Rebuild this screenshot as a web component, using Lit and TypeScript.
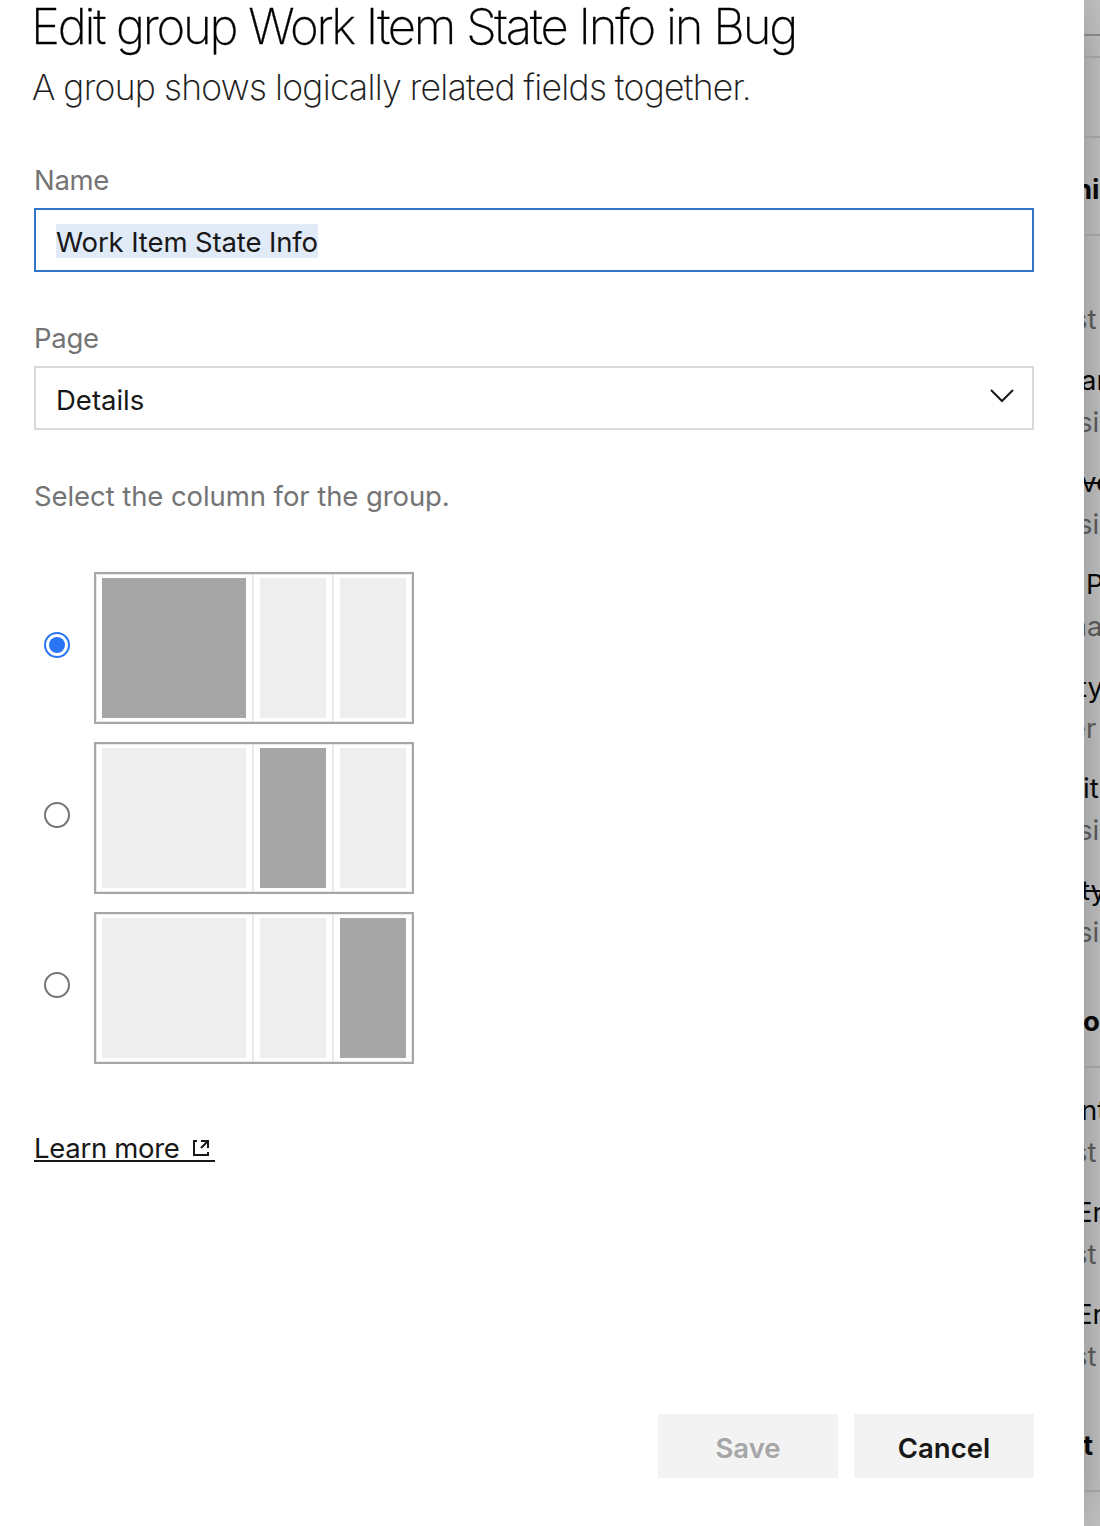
import { LitElement, html, css, svg } from "lit";
import { customElement, state } from "lit/decorators.js";
import { classMap } from "lit/directives/class-map.js";

type BackRow = { gap: number; x: number; text: string; kind: string };

// Slice of the form layout that stays visible beside the dialog.
const BACK_ROWS: BackRow[] = [
  { gap: 34, x: 0, text: "", kind: "rule strong" },
  { gap: 20, x: 0, text: "", kind: "rule" },
  { gap: 78, x: 0, text: "", kind: "rule" },
  { gap: 34, x: -9, text: "ni", kind: "head" },
  { gap: 28, x: 0, text: "", kind: "rule" },
  { gap: 66, x: -11, text: "st", kind: "sub" },
  { gap: 27, x: -3, text: "ar", kind: "field" },
  { gap: 8, x: -6, text: "si", kind: "sub" },
  { gap: 26, x: -3, text: "ve", kind: "field gone" },
  { gap: 8, x: -6, text: "si", kind: "sub" },
  { gap: 26, x: 2, text: "P", kind: "field" },
  { gap: 8, x: -21, text: "ma", kind: "sub" },
  { gap: 27, x: -6, text: "ty", kind: "field" },
  { gap: 7, x: -14, text: "er", kind: "sub" },
  { gap: 26, x: -1, text: "it", kind: "field" },
  { gap: 8, x: -6, text: "si", kind: "sub" },
  { gap: 26, x: -3, text: "ty", kind: "field gone" },
  { gap: 8, x: -6, text: "si", kind: "sub" },
  { gap: 55, x: -1, text: "o", kind: "head" },
  { gap: 28, x: 0, text: "", kind: "rule" },
  { gap: 25, x: -3, text: "nt", kind: "field" },
  { gap: 8, x: -11, text: "st", kind: "sub" },
  { gap: 26, x: -8, text: "Er", kind: "field" },
  { gap: 8, x: -11, text: "st", kind: "sub" },
  { gap: 26, x: -8, text: "Er", kind: "field" },
  { gap: 8, x: -11, text: "st", kind: "sub" },
  { gap: 55, x: -1, text: "t", kind: "head" },
  { gap: 28, x: 0, text: "", kind: "rule" },
];

@customElement("form-backdrop")
class FormBackdrop extends LitElement {
  static styles = css`
    :host {
      display: flex;
      flex-direction: column;
      width: 16px;
      overflow: hidden;
      background:
        linear-gradient(180deg, rgba(190, 190, 190, 0.7), rgba(190, 190, 190, 0) 50px),
        linear-gradient(0deg, rgba(190, 190, 190, 0.7), rgba(190, 190, 190, 0) 50px),
        linear-gradient(90deg, #a7a7a7, #b7b7b7);
      font: 27.5px/34px Inter, "Liberation Sans", sans-serif;
      color: #080808;
    }
    .row { flex: none; white-space: nowrap; }
    .label { display: block; height: 34px; }
    .rule .label { height: 2px; background: #9f9f9f; }
    .strong .label { background: #858585; }
    .head { font-weight: 700; }
    .sub { color: #555; }
    .gone { text-decoration: line-through; }
  `;
  render() {
    return BACK_ROWS.map(
      (r) => html`<div class="row ${r.kind}" style="padding-top:${r.gap}px">
        <span class="label" style="margin-left:${r.x}px">${r.text}</span>
      </div>`
    );
  }
}

@customElement("column-preview")
class ColumnPreview extends LitElement {
  static properties = { active: { type: Number } };
  declare active: number;
  static styles = css`
    :host {
      display: flex;
      box-sizing: border-box;
      width: 320px;
      height: 152px;
      border: 2px solid #a6a6a6;
      box-shadow: inset 0 0 0 1px #e9e9e9;
    }
    .cell { flex: none; box-sizing: border-box; width: 80px; padding: 4px 6px; border-right: 2px solid #e8e8e8; }
    .wide { width: 158px; }
    .last { width: 78px; border-right: 0; }
    .fill { height: 140px; background: #eee; }
    .on { background: #a6a6a6; }
  `;
  render() {
    return [0, 1, 2].map(
      (i) => html`<div class=${classMap({ cell: true, wide: i === 0, last: i === 2 })}>
        <div class=${classMap({ fill: true, on: i === this.active })}></div>
      </div>`
    );
  }
}

@customElement("app-root")
class AppRoot extends LitElement {
  @state() private column = 0;

  static styles = css`
    :host {
      display: flex;
      width: 1100px;
      height: 1526px;
      overflow: hidden;
      background: #fff;
      font: 27.5px/34px Inter, "Liberation Sans", sans-serif;
      color: #181818;
    }
    .dialog {
      flex: none;
      box-sizing: border-box;
      width: 1084px;
      padding: 0 50px 48px 34px;
      display: flex;
      flex-direction: column;
      align-items: flex-start;
      white-space: nowrap;
    }
    .title { margin: -3px 0 0 -3px; font-size: 49px; line-height: 60px; font-weight: 200; -webkit-text-stroke: 0.3px #000; letter-spacing: -2.25px; word-spacing: 0.5px; color: #000; }
    .lead { margin: 9px 0 0 -2px; font-size: 35.5px; line-height: 44px; font-weight: 200; -webkit-text-stroke: 0.2px #181818; letter-spacing: -0.67px; word-spacing: -0.6px; }
    .label { color: #747474; letter-spacing: -0.08px; }
    .name-label { margin-top: 53px; letter-spacing: -0.3px; }
    .page-label { margin-top: 49px; letter-spacing: -0.3px; }
    .hint { margin-top: 49px; }
    .box {
      box-sizing: border-box;
      width: 1000px;
      height: 64px;
      margin-top: 11px;
      padding: 0 18px 0 20px;
      border: 2px solid #d9d9d9;
      display: flex;
      align-items: center;
      justify-content: space-between;
    }
    .focused { border-color: #2f76c7; }
    .selected { background: #e1eaf7; height: 33px; line-height: 34px; padding-top: 1px; margin-top: 2px; letter-spacing: -0.12px; }
    .value { padding-top: 4px; }
    .chevron { margin-bottom: 4px; }
    .options { display: flex; flex-direction: column; gap: 18px; margin-top: 59px; padding-left: 10px; }
    .option { display: flex; gap: 24px; }
    .radio { margin-top: 60px; width: 26px; height: 26px; display: block; }
    .more {
      display: flex;
      width: 181px;
      height: 31px;
      box-sizing: border-box;
      margin-top: 67px;
      border-bottom: 2px solid #181818;
      letter-spacing: -0.3px;
    }
    .ext { margin: 9px 0 0 auto; padding-right: 5px; flex: none; }
    .actions { display: flex; gap: 16px; margin-top: auto; align-self: flex-end; }
    .btn {
      width: 180px;
      height: 64px;
      padding: 4px 0 0;
      border: 0;
      background: #f3f3f3;
      font: inherit;
      font-weight: 600;
      color: #181818;
      text-align: center;
    }
    .btn:disabled { color: #a6a6a6; }
  `;

  private radio(on: boolean) {
    return html`<svg class="radio" viewBox="0 0 26 26">
      <circle cx="13" cy="13" r="12" fill="#fff" stroke=${on ? "#2975f6" : "#757575"} stroke-width="2" />
      ${on ? svg`<circle cx="13" cy="13" r="8" fill="#2975f6" />` : null}
    </svg>`;
  }

  render() {
    return html`
      <main class="dialog">
        <h1 class="title">Edit group Work Item State Info in Bug</h1>
        <div class="lead">A group shows logically related fields together.</div>
        <label class="label name-label">Name</label>
        <div class="box focused"><span class="selected">Work Item State Info</span></div>
        <label class="label page-label">Page</label>
        <div class="box">
          <span class="value">Details</span>
          <svg class="chevron" width="24" height="16" viewBox="0 0 24 16" fill="none" stroke="#181818" stroke-width="2">
            <path d="M1 2l11 11 11-11" />
          </svg>
        </div>
        <div class="label hint">Select the column for the group.</div>
        <div class="options">
          ${[0, 1, 2].map(
            (i) => html`<div class="option" @click=${() => (this.column = i)}>
              ${this.radio(i === this.column)}
              <column-preview .active=${i}></column-preview>
            </div>`
          )}
        </div>
        <a class="more"><span>Learn more</span>
          <svg class="ext" width="17" height="17" viewBox="0 0 17 17" fill="none" stroke="#181818" stroke-width="2">
            <path d="M4 1H1V15H15V12M8 1H15V8M15 1L8 8" />
          </svg>
        </a>
        <div class="actions">
          <button class="btn" disabled>Save</button>
          <button class="btn">Cancel</button>
        </div>
      </main>
      <form-backdrop></form-backdrop>
    `;
  }
}
